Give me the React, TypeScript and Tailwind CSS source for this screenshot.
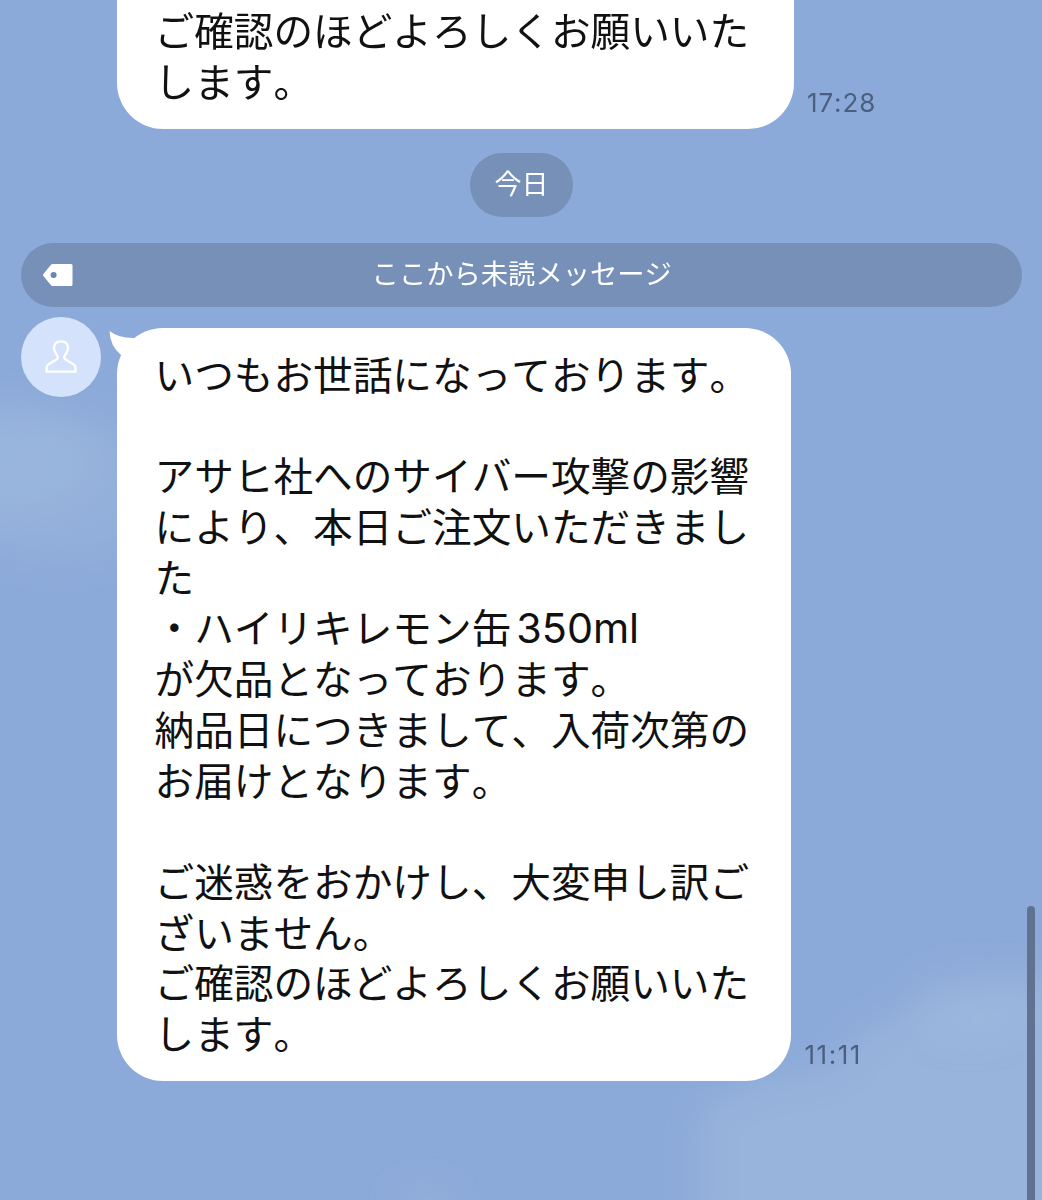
import React from "react";

const previousLines = ["ご確認のほどよろしくお願いいた", "します。"];

const messageLines = [
  "いつもお世話になっております。",
  "",
  "アサヒ社へのサイバー攻撃の影響",
  "により、本日ご注文いただきまし",
  "た",
  "・ハイリキレモン缶350ml",
  "が欠品となっております。",
  "納品日につきまして、入荷次第の",
  "お届けとなります。",
  "",
  "ご迷惑をおかけし、大変申し訳ご",
  "ざいません。",
  "ご確認のほどよろしくお願いいた",
  "します。",
];

function Lines({ lines }: { lines: string[] }) {
  return (
    <div className="text-[39.65px] leading-[50.7px] whitespace-nowrap text-[#111111]">
      {lines.map((line, i) => (
        <p key={i} className="h-[50.7px]">
          {/* Latin runs are set slightly larger than the kana around them */}
          {line.split(/([0-9a-z]+)/).map((part, j) =>
            j % 2 ? (
              <span key={j} className="ml-[5px] text-[41.3px] leading-none">
                {part}
              </span>
            ) : (
              part
            )
          )}
        </p>
      ))}
    </div>
  );
}

function Clouds() {
  return (
    <svg className="absolute inset-0 h-full w-full" viewBox="0 0 1042 1200" fill="#a3bde0">
      <defs>
        <filter id="soft" x="-40%" y="-40%" width="180%" height="180%">
          <feGaussianBlur stdDeviation="18" />
        </filter>
      </defs>
      <g filter="url(#soft)">
        <ellipse cx="10" cy="460" rx="90" ry="55" opacity="0.4" />
        <ellipse cx="60" cy="490" rx="130" ry="70" opacity="0.3" />
        <ellipse cx="970" cy="1005" rx="62" ry="32" opacity="0.35" />
        <path d="M700 1240V1110L760 1080L830 1070L865 1030L930 1005L1090 960V1240Z" opacity="0.5" />
        <ellipse cx="425" cy="1205" rx="28" ry="14" opacity="0.5" />
      </g>
    </svg>
  );
}

function App() {
  return (
    <div className="relative h-[1200px] w-[1042px] overflow-hidden bg-[#8caad9] font-['Inter','Noto_Sans_CJK_JP',sans-serif] [font-kerning:none]">
      <Clouds />

      <main className="relative flex flex-col">
        {/* Previous message */}
        <div className="flex items-end pl-[117px]">
          <div className="flex h-[129px] w-[676.5px] items-end rounded-b-[46px] bg-white pb-[20.5px] pl-[37.5px]">
            <Lines lines={previousLines} />
          </div>
          <time className="mb-[10px] ml-[13.5px] text-[26px] leading-8 tracking-[0.9px] text-[#4b5f80]">17:28</time>
        </div>

        {/* Date */}
        <div className="mt-6 ml-px flex h-[63.5px] w-[102.5px] items-center justify-center self-center rounded-full bg-[#7790b8] pt-px text-[27px] text-white">
          今日
        </div>

        {/* Unread marker */}
        <div className="mr-[20.5px] ml-[21px] mt-[26px] flex h-16 items-center rounded-full bg-[#7790b8] text-white">
          <svg className="ml-[22px] h-[22px] w-[30px]" viewBox="0 0 30 22" fill="white">
            <path d="M9.6 0H28Q29.5 0 29.5 1.5V20.5Q29.5 22 28 22H9.6Q8.8 22 8.2 21.4L0.4 12Q-0.4 11 0.4 10L8.2 0.6Q8.8 0 9.6 0Z" />
            <circle cx="10.6" cy="11" r="3" fill="#6884b3" />
          </svg>
          <p className="flex-1 pt-0.5 pr-[51px] text-center text-[27.3px]">ここから未読メッセージ</p>
        </div>

        {/* New message */}
        <div className="mt-[10.5px] flex items-start pl-[21px]">
          <div className="flex size-20 items-center justify-center rounded-full bg-[#d5e2fc]">
            <svg className="h-[34px] w-8" viewBox="0 0 32 34" fill="none" stroke="white" strokeWidth="2.4">
              <path d="M1.6 31.6V27.8Q1.6 25.4 3.6 24.3L11 19.8Q13.4 18.2 12.6 16.2L10.4 12.6Q8.8 10 8.9 7.6Q9.6 1.4 16 1.4Q22.4 1.4 23.1 7.6Q23.2 10 21.6 12.6L19.4 16.2Q18.6 18.2 21 19.8L28.4 24.3Q30.4 25.4 30.4 27.8V31.6Z" />
            </svg>
          </div>
          <div className="relative mt-[10.5px] ml-4 h-[753px] w-[673.5px] rounded-[46px] bg-white pt-[23.5px] pl-[37.5px]">
            <svg className="absolute top-[3px] left-[-8px] h-7 w-9" viewBox="0 0 36 28" fill="white">
              <path d="M0.5 0Q10 7.5 25.5 7L36 10L20 28L12 24Q1 15 0.5 0Z" />
            </svg>
            <Lines lines={messageLines} />
          </div>
          <time className="mb-[10px] ml-[14px] self-end text-[26px] leading-8 tracking-[1.5px] text-[#4b5f80]">11:11</time>
        </div>
      </main>

      {/* Scrollbar */}
      <div className="absolute top-[906px] right-[7px] h-[320px] w-2 rounded-full bg-[#5f7290]" />
    </div>
  );
}

export default App;
